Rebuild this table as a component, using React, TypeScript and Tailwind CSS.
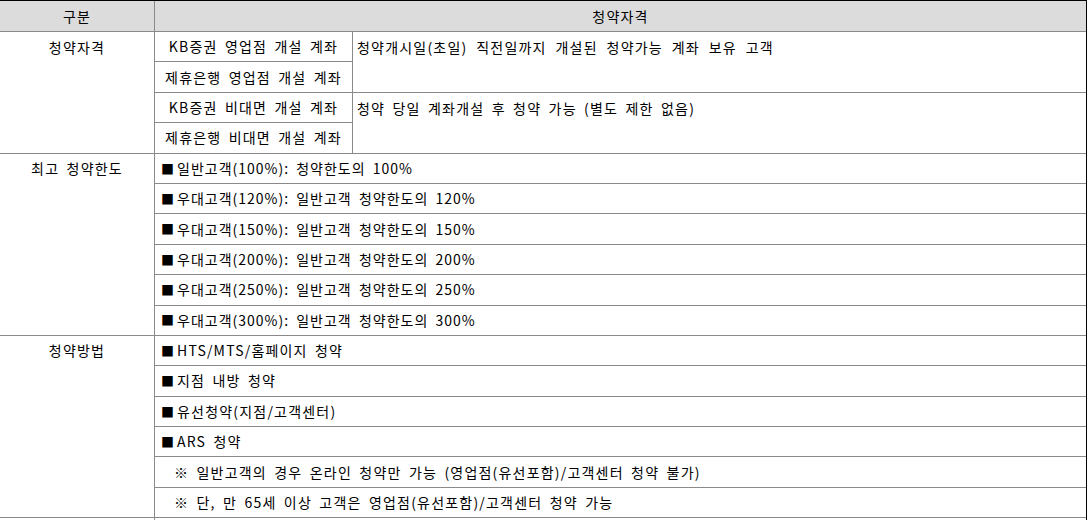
import React from 'react';

const line = 'border-[#8a8a8a]';
const txt = "[font-family:'Noto_Sans_CJK_KR',sans-serif] text-[14px] tracking-[1.2px] [word-spacing:3px] text-black";

const limits = [
  '일반고객(100%): 청약한도의 100%',
  '우대고객(120%): 일반고객 청약한도의 120%',
  '우대고객(150%): 일반고객 청약한도의 150%',
  '우대고객(200%): 일반고객 청약한도의 200%',
  '우대고객(250%): 일반고객 청약한도의 250%',
  '우대고객(300%): 일반고객 청약한도의 300%',
];

const methods = [
  { text: 'HTS/MTS/홈페이지 청약', note: false },
  { text: '지점 내방 청약', note: false },
  { text: '유선청약(지점/고객센터)', note: false },
  { text: 'ARS 청약', note: false },
  { text: '※ 일반고객의 경우 온라인 청약만 가능 (영업점(유선포함)/고객센터 청약 불가)', note: true },
  { text: '※ 단, 만 65세 이상 고객은 영업점(유선포함)/고객센터 청약 가능', note: true },
];

const Bullet = () => <span className="text-[13px] tracking-normal mr-[3px]">■</span>;

const SectionLabel: React.FC<{ label: string; span: string }> = ({ label, span }) => (
  <div className={`${span} border-r border-b ${line}`}>
    <div className="h-[30px] flex items-center justify-center">{label}</div>
  </div>
);

export default function App() {
  return (
    <div className={`w-[1087px] h-[520px] overflow-hidden bg-white ${txt}`}>
      <div className="border-t border-r border-black h-full">
        {/* header */}
        <div className={`grid grid-cols-[155px_1fr] h-[31px] bg-[#dcdcdc] border-b ${line}`}>
          <div className={`flex items-center justify-center border-r ${line}`}>구분</div>
          <div className="flex items-center justify-center">청약자격</div>
        </div>

        {/* body */}
        <div className="grid grid-cols-[155px_198px_1fr] auto-rows-[30.4px]">
          <SectionLabel label="청약자격" span="row-span-4" />
          <div className={`flex items-center justify-center border-r border-b ${line}`}>KB증권 영업점 개설 계좌</div>
          <div className={`row-span-2 pl-1 pt-[5px] [word-spacing:4.5px] border-b ${line}`}>
            청약개시일(초일) 직전일까지 개설된 청약가능 계좌 보유 고객
          </div>
          <div className={`flex items-center justify-center border-r border-b ${line}`}>제휴은행 영업점 개설 계좌</div>
          <div className={`flex items-center justify-center border-r border-b ${line}`}>KB증권 비대면 개설 계좌</div>
          <div className={`row-span-2 pl-1 pt-[5px] border-b ${line}`}>청약 당일 계좌개설 후 청약 가능 (별도 제한 없음)</div>
          <div className={`flex items-center justify-center border-r border-b ${line}`}>제휴은행 비대면 개설 계좌</div>

          <SectionLabel label="최고 청약한도" span="row-span-6" />
          {limits.map((t) => (
            <div key={t} className={`col-span-2 flex items-center pl-[6px] tracking-[1px] border-b ${line}`}>
              <Bullet />
              {t}
            </div>
          ))}

          <SectionLabel label="청약방법" span="row-span-6" />
          {methods.map((m) => (
            <div key={m.text} className={`col-span-2 flex items-center border-b ${line} ${m.note ? 'pl-[19px]' : 'pl-[6px]'}`}>
              {!m.note && <Bullet />}
              {m.text}
            </div>
          ))}

          <div className={`border-r ${line}`} />
          <div className="col-span-2" />
        </div>
      </div>
    </div>
  );
}
